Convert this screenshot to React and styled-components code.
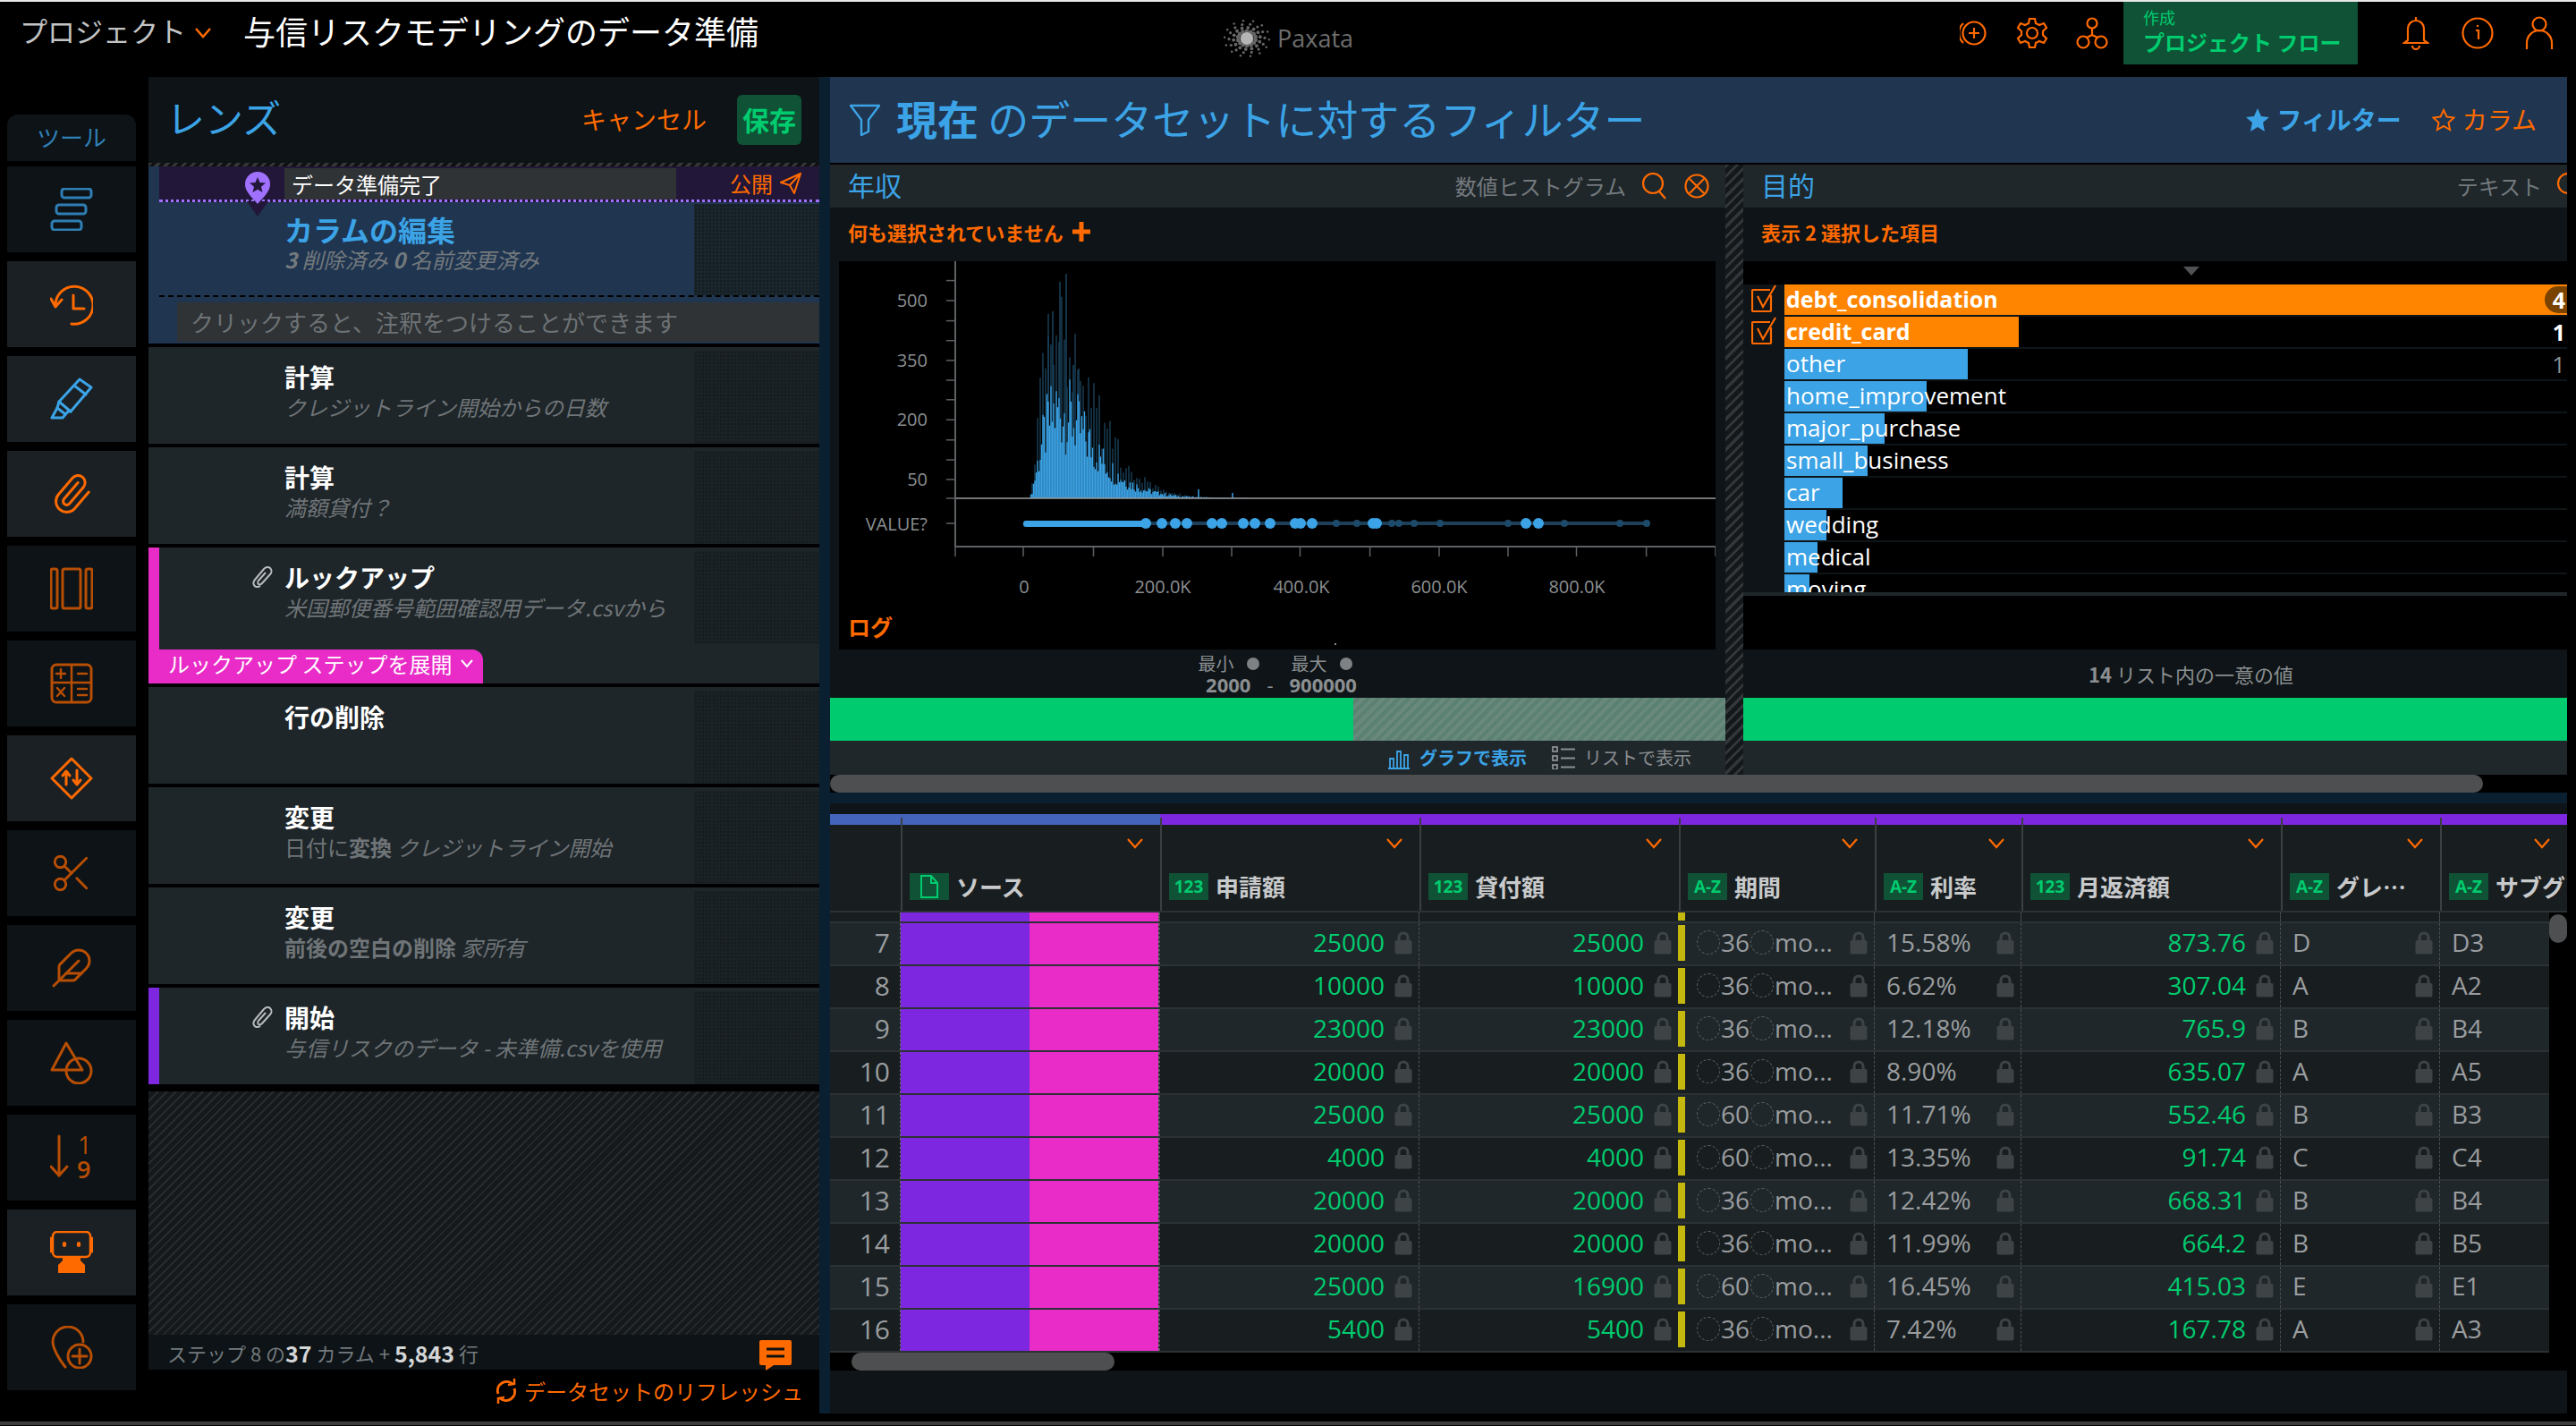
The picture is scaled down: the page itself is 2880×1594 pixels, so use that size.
import React from "react";
import styled, { createGlobalStyle } from "styled-components";
import { Feather, Paperclip, Scissors } from "lucide-react";

const ORANGE = "#ff6a00";
const DIM = "#b84e04";
const BLUE = "#3ba3e6";
const GREEN = "#00cc6f";
const FONT = `"Open Sans", "Noto Sans CJK JP", sans-serif`;
const CJK = `"Noto Sans CJK JP", "Open Sans", sans-serif`;

const Global = createGlobalStyle`
  html, body { margin: 0; padding: 0; background: #000; }
  * { box-sizing: border-box; }
`;

const Page = styled.div`
  width: 2880px;
  height: 1594px;
  background: #000;
  border-top: 2px solid #e8e8e8;
  display: flex;
  flex-direction: column;
  overflow: hidden;
  font-family: ${FONT};
  color: #fff;
`;
const BottomEdge = styled.div`
  height: 4px;
  margin-top: 9px;
  flex: none;
  background: #3d3d3d;
`;

/* top bar */
const TopBar = styled.div`
  height: 70px;
  margin-bottom: 14px;
  display: flex;
  align-items: center;
  flex: none;
`;
const Project = styled.div`
  font: 400 31px/40px ${CJK};
  color: #c2c4c5;
  margin-left: 22px;
  width: 196px;
  margin-bottom: 6px;
`;
const Chevron = styled.svg`
  flex: none;
  fill: none;
  stroke: ${ORANGE};
  stroke-width: 2.5;
`;
const PageTitle = styled.div`
  font: 400 36px/40px ${CJK};
  color: #fff;
  margin-left: 36px;
  width: 1096px;
  margin-bottom: 6px;
  white-space: nowrap;
`;
const Logo = styled.div`
  display: flex;
  align-items: center;
  gap: 8px;
  margin-top: 12px;
  font: 400 27px/30px "Open Sans", sans-serif;
  color: #6d6d6d;
`;
const NavGroup = styled.div`
  margin-left: auto;
  padding-right: 25px;
  display: flex;
  align-items: center;
  height: 100%;
`;
const NavIcon = styled.svg`
  flex: none;
  margin-left: ${(p) => p.$ml}px;
  fill: none;
  stroke: ${ORANGE};
  stroke-width: 2.2;
`;
const FlowBox = styled.div`
  width: 262px;
  height: 70px;
  margin-left: 17px;
  background: #0f5235;
  padding: 6px 0 0 22px;
  color: ${GREEN};
`;
const FlowSmall = styled.div`
  font: 400 18px/22px ${CJK};
`;
const FlowBig = styled.div`
  font: 700 24px/34px ${CJK};
  white-space: nowrap;
`;

/* page body */
const Body = styled.div`
  height: 1494px;
  padding-left: 8px;
  display: flex;
  flex: none;
`;

/* left tool rail */
const Rail = styled.div`
  width: 144px;
  margin-right: 14px;
  padding-top: 42px;
  flex: none;
`;
const RailTab = styled.div`
  height: 52px;
  margin-bottom: 6px;
  background: #0d1316;
  border-radius: 12px 12px 0 0;
  color: #2f7fb5;
  font: 400 26px/50px ${CJK};
  text-align: center;
`;
const RailItem = styled.div`
  height: 96px;
  margin-bottom: 10px;
  background: ${(p) => (p.$on ? "#1a2024" : "#0d1316")};
  display: flex;
  align-items: center;
  justify-content: center;
  color: ${(p) => p.$color};
  svg { display: block; }
`;

/* lens panel */
const Lens = styled.div`
  width: 750px;
  flex: none;
  display: flex;
  flex-direction: column;
`;
const LensHead = styled.div`
  height: 96px;
  background: #0d1316;
  display: flex;
  align-items: center;
  padding: 0 20px 0 20px;
  flex: none;
`;
const LensTitle = styled.div`
  font: 400 43px/50px ${CJK};
  color: ${BLUE};
  flex: 1;
  margin-bottom: 8px;
`;
const Cancel = styled.div`
  font: 400 28px/40px ${CJK};
  color: ${ORANGE};
  margin: 0 34px 2px 0;
`;
const Save = styled.div`
  width: 72px;
  height: 56px;
  border-radius: 6px;
  background: #0f5235;
  color: ${GREEN};
  font: 700 30px/54px ${CJK};
  text-align: center;
`;
const DashStrip = styled.div`
  height: 4px;
  flex: none;
  background: repeating-linear-gradient(135deg, #34383a 0 3px, #111 3px 7px);
`;
const StepList = styled.div`
  display: flex;
  flex-direction: column;
  gap: 4px;
  flex: none;
`;
const ActiveStep = styled.div`
  height: 198px;
  background: #1f3550;
  position: relative;
`;
const MilestoneBar = styled.div`
  margin-left: 12px;
  height: 40px;
  background: #221738;
  border-bottom: 3px dotted #a070ff;
  display: flex;
`;
const MilestoneName = styled.div`
  margin-left: 140px;
  width: 438px;
  height: 35px;
  margin-top: 2px;
  background: #2f3336;
  font: 400 24px/36px ${CJK};
  padding-left: 8px;
`;
const Publish = styled.div`
  margin-left: auto;
  margin-right: 20px;
  display: flex;
  align-items: center;
  gap: 8px;
  font: 400 24px/34px ${CJK};
  color: ${ORANGE};
`;
const Pin = styled.svg`
  position: absolute;
  left: 107px;
  top: 6px;
`;
const ActiveBody = styled.div`
  margin-left: 12px;
  height: 106px;
  border-bottom: 2px dashed #000;
  display: flex;
`;
const ActiveMain = styled.div`
  flex: 1;
  padding: 12px 0 0 140px;
`;
const ActiveTitle = styled.div`
  font: 700 32px/36px ${CJK};
  color: ${BLUE};
`;
const ActiveSub = styled.div`
  font: italic 400 24px/32px ${CJK};
  color: #73797d;
  b { font-weight: 700; }
`;
const Shade = styled.div`
  width: 140px;
  flex: none;
  margin-top: ${(p) => p.$top}px;
  margin-bottom: ${(p) => p.$bottom || 0}px;
  background-color: ${(p) => (p.$active ? "#19262e" : "#1b2226")};
  background-image: radial-gradient(#151a1d 1px, transparent 1px);
  background-size: 4px 4px;
`;
const NoteRow = styled.div`
  height: 50px;
  padding: 6px 0 0 32px;
`;
const NoteField = styled.div`
  height: 44px;
  background: #2f3336;
  color: #6d7275;
  font: 400 26px/44px ${CJK};
  padding-left: 15px;
  white-space: nowrap;
`;
const Step = styled.div`
  background: #1e262a;
  flex: none;
`;
const StepBody = styled.div`
  height: ${(p) => p.$h}px;
  display: flex;
  border-left: ${(p) => (p.$marker ? `12px solid ${p.$marker}` : "none")};
`;
const StepMain = styled.div`
  flex: 1;
  padding: 15px 0 0 ${(p) => (p.$marker ? 104 : 116)}px;
  display: grid;
  grid-template-columns: 24px 1fr;
  column-gap: 12px;
  grid-auto-rows: min-content;
  min-width: 0;
`;
const StepClip = styled.div`
  color: #b9bcbe;
  display: flex;
  align-items: center;
`;
const StepTitle = styled.div`
  font: 700 28px/36px ${CJK};
  color: #fff;
  grid-column: 2;
`;
const StepSub = styled.div`
  grid-column: 2;
  font: 400 24px/32px ${CJK};
  color: #6f7477;
  white-space: nowrap;
  em { font-style: italic; }
  b { font-weight: 700; }
`;
const ExpandRow = styled.div`
  height: 38px;
`;
const ExpandTab = styled.div`
  width: 374px;
  height: 38px;
  background: #e92bc8;
  border-radius: 0 12px 0 0;
  font: 400 24px/32px ${CJK};
  padding: 0 0 6px 22px;
  display: flex;
  align-items: center;
  gap: 10px;
  white-space: nowrap;
`;
const Stripes = styled.div`
  flex: 1;
  margin-top: 8px;
  background: repeating-linear-gradient(135deg, #262b2f 0 2px, #15191c 2px 7px);
`;
const LensFoot = styled.div`
  height: 39px;
  flex: none;
  background: #0d1316;
  display: flex;
  align-items: center;
  padding: 0 31px 0 21px;
  font: 400 22px/34px ${CJK};
  color: #73797d;
  white-space: pre;
  b { color: #d4d6d7; font-weight: 700; font-size: 25px; }
`;
const ChatIcon = styled.svg`
  margin-left: auto;
  margin-top: 6px;
  flex: none;
`;
const Refresh = styled.div`
  height: 49px;
  flex: none;
  display: flex;
  align-items: center;
  justify-content: flex-end;
  gap: 8px;
  padding: 0 18px 2px 0;
  font: 400 24px/34px ${CJK};
  color: ${ORANGE};
`;

/* filter side */
const Main = styled.div`
  width: 1954px;
  flex: none;
  background: #0a1f30;
  display: flex;
  flex-direction: column;
`;
const FilterHead = styled.div`
  height: 96px;
  flex: none;
  margin-left: 12px;
  background: #20354f;
  display: flex;
  align-items: center;
  padding: 0 34px 0 22px;
  color: ${BLUE};
`;
const FilterTitle = styled.div`
  font: 400 46px/56px ${CJK};
  margin: 0 0 6px 18px;
  flex: 1;
  white-space: pre;
  b { font-weight: 700; }
`;
const FilterTab = styled.div`
  display: flex;
  align-items: center;
  gap: 8px;
  margin-left: 34px;
  font: ${(p) => (p.$on ? 700 : 400)} 28px/40px ${CJK};
  color: ${(p) => (p.$on ? BLUE : ORANGE)};
  span { margin-bottom: 2px; }
`;
const BlackGap = styled.div`
  height: 2px;
  flex: none;
  margin-left: 12px;
  background: #000;
`;
const Cards = styled.div`
  height: 682px;
  margin-left: 12px;
  display: flex;
  flex: none;
`;
const Card = styled.div`
  width: ${(p) => p.$w}px;
  flex: none;
  display: flex;
  flex-direction: column;
  overflow: hidden;
`;
const Hatch = styled.div`
  width: 20px;
  flex: none;
  background: repeating-linear-gradient(135deg, #31363a 0 3px, #14181a 3px 8px);
`;
const CardHead = styled.div`
  height: 48px;
  flex: none;
  background: #1f272b;
  display: flex;
  align-items: center;
  padding-left: 20px;
  white-space: nowrap;
`;
const CardName = styled.div`
  font: 400 30px/44px ${CJK};
  color: ${BLUE};
  flex: 1;
  margin-bottom: 4px;
`;
const CardType = styled.div`
  font: 400 24px/44px ${CJK};
  color: #73797d;
`;
const HeadIcon = styled.span`
  color: ${ORANGE};
  margin-left: ${(p) => p.$ml}px;
  margin-right: ${(p) => p.$mr || 0}px;
  display: flex;
  flex: none;
`;
const Selection = styled.div`
  height: 60px;
  flex: none;
  background: #0e1417;
  padding: 0 0 7px 20px;
  display: flex;
  align-items: center;
  gap: 10px;
  font: 700 22px/30px ${CJK};
  color: ${ORANGE};
`;
const ChartWrap = styled.div`
  height: 434px;
  flex: none;
  background: #0e1417;
  padding: 0 10px;
`;
const ChartSvg = styled.svg`
  display: block;
  background: #000;
`;
const AxisText = styled.text`
  font-family: "Open Sans", sans-serif;
  font-size: 20px;
  fill: #8b8f91;
  text-anchor: ${(p) => p.$anchor || "end"};
  dominant-baseline: central;
`;
const LogText = styled.text`
  font-family: ${CJK};
  font-weight: 700;
  font-size: 25px;
  fill: ${ORANGE};
  dominant-baseline: central;
`;
const Range = styled.div`
  height: 54px;
  flex: none;
  background: #0e1417;
  display: flex;
  flex-direction: column;
  align-items: center;
  padding: 4px 0 0 0;
  color: #8b8f91;
`;
const RangeTop = styled.div`
  display: flex;
  align-items: center;
  font: 400 20px/24px ${CJK};
  transform: translateX(-3px);
`;
const RangeDot = styled.span`
  width: 14px;
  height: 14px;
  border-radius: 50%;
  background: #7e8285;
  margin: 0 ${(p) => p.$mr}px 0 14px;
`;
const RangeValues = styled.div`
  display: flex;
  font: 700 22px/22px "Open Sans", sans-serif;
  transform: translateX(4px);
`;
const RangeDash = styled.span`
  margin: 0 18px;
  font-weight: 400;
`;
const GreenBar = styled.div`
  height: 48px;
  flex: none;
  display: flex;
  background: repeating-linear-gradient(135deg, #5b8172 0 4px, #68897c 4px 8px);
`;
const GreenFill = styled.div`
  background: ${GREEN};
`;
const CardFoot = styled.div`
  height: 38px;
  flex: none;
  background: #1f272b;
  display: flex;
  align-items: center;
  justify-content: flex-end;
  padding-right: 38px;
`;
const ViewOption = styled.div`
  display: flex;
  align-items: center;
  gap: 10px;
  margin-left: 28px;
  font: ${(p) => (p.$on ? 700 : 400)} 20px/30px ${CJK};
  color: ${(p) => (p.$on ? BLUE : "#8b8f91")};
`;
const ListBody = styled.div`
  height: 434px;
  flex: none;
  background: #000;
`;
const Caret = styled.div`
  height: 22px;
  display: flex;
  justify-content: center;
  padding: 6px 0 0 80px;
  &::before {
    content: "";
    height: 0;
    border: 9px solid transparent;
    border-top: 10px solid #4f5356;
    border-bottom: 0;
  }
`;
const ListScroll = styled.div`
  margin-top: 4px;
  height: 344px;
  overflow: hidden;
  background: #0e1417;
`;
const ListRow = styled.div`
  height: 36px;
  display: flex;
`;
const CheckCol = styled.div`
  width: 46px;
  flex: none;
  padding: 0 0 0 9px;
`;
const BarCell = styled.div`
  flex: 1;
  height: 34px;
  background-color: #000;
  background-image: linear-gradient(${(p) => p.$c}, ${(p) => p.$c});
  background-repeat: no-repeat;
  font: ${(p) => (p.$bold ? "700 25px/33px" : "400 26px/33px")} "Open Sans", sans-serif;
  padding-left: 2px;
  display: flex;
  justify-content: space-between;
  white-space: nowrap;
  overflow: hidden;
`;
const Count = styled.span`
  font-weight: ${(p) => (p.$strong ? 700 : 400)};
  color: ${(p) => p.$c};
  background: ${(p) => p.$bg || "transparent"};
  border-radius: 16px 0 0 16px;
  height: 30px;
  margin-top: 2px;
  line-height: 30px;
  padding: 0 2px 0 ${(p) => (p.$bg ? 9 : 0)}px;
`;
const ListEnd = styled.div`
  height: 4px;
  background: #1f272b;
`;
const UniqueCount = styled.div`
  height: 54px;
  flex: none;
  background: #0e1417;
  font: 400 22px/54px ${CJK};
  color: #8b8f91;
  text-align: center;
  padding-left: 80px;
  b { font-weight: 700; }
`;
const HScroll = styled.div`
  height: 20px;
  flex: none;
  margin-left: ${(p) => p.$ml}px;
  background: #000;
  display: flex;
`;
const Thumb = styled.div`
  height: 20px;
  width: ${(p) => p.$w}px;
  margin-left: ${(p) => p.$ml}px;
  border-radius: 10px;
  background: #4d4f51;
`;

/* data table */
const Table = styled.div`
  margin: 12px 0 0 12px;
  flex: 1;
  background: #0e1417;
  padding-top: 12px;
  display: flex;
  flex-direction: column;
  min-height: 0;
`;
const Bands = styled.div`
  height: 12px;
  flex: none;
  display: flex;
  background: #7d28e0;
`;
const BandBlue = styled.div`
  width: 369px;
  background: #4464bc;
`;
const HeadRow = styled.div`
  height: 98px;
  flex: none;
  display: flex;
  background: #181d20;
  border-bottom: 2px solid #2c3135;
`;
const HeadCell = styled.div`
  width: ${(p) => p.$w}px;
  flex: none;
  border-left: ${(p) => (p.$first ? "none" : "2px solid #3b3f42")};
  margin-top: -8px;
  display: flex;
  flex-direction: column;
  overflow: hidden;
  padding: 0 0 12px 8px;
`;
const HeadCaret = styled.svg`
  align-self: flex-end;
  margin: 23px 19px 0 0;
  fill: none;
  stroke: ${ORANGE};
  stroke-width: 2.2;
  flex: none;
`;
const HeadName = styled.div`
  margin-top: auto;
  display: flex;
  align-items: center;
  gap: 8px;
  font: 700 26px/30px ${CJK};
  color: #c8cacb;
  white-space: nowrap;
`;
const TypeBadge = styled.span`
  width: 44px;
  height: 30px;
  flex: none;
  background: #0f5235;
  color: ${GREEN};
  font: 700 19px/30px "Open Sans", sans-serif;
  text-align: center;
  display: flex;
  align-items: center;
  justify-content: center;
`;
const TableBody = styled.div`
  height: 492px;
  flex: none;
  display: flex;
`;
const RowsWrap = styled.div`
  flex: 1;
  min-width: 0;
`;
const VScroll = styled.div`
  width: 20px;
  flex: none;
  background: #000;
  padding-top: 2px;
`;
const VThumb = styled.div`
  height: 32px;
  border-radius: 10px;
  background: #4d4f51;
`;
const Row = styled.div`
  height: ${(p) => (p.$spacer ? 12 : 48)}px;
  display: flex;
  background: ${(p) => (p.$alt ? "#1f272b" : "#181d20")};
  border-bottom: 2px solid #2c3135;
`;
const Cell = styled.div`
  width: ${(p) => p.$w}px;
  flex: none;
  display: flex;
  align-items: center;
  justify-content: ${(p) => (p.$right ? "flex-end" : "flex-start")};
  padding: 0 7px 3px 13px;
  border-left: ${(p) => (p.$first ? "none" : "1px dashed #4c5154")};
  font: 400 28px/43px "Open Sans", sans-serif;
  color: ${(p) => (p.$green ? GREEN : "#9a9d9f")};
  white-space: nowrap;
  overflow: hidden;
  svg { flex: none; }
`;
const CellText = styled.span`
  flex: ${(p) => (p.$grow ? 1 : "none")};
  margin-right: 11px;
`;
const RowNum = styled.div`
  width: 79px;
  flex: none;
  padding-right: 12px;
  text-align: right;
  font: 400 30px/43px "Open Sans", sans-serif;
  color: #9a9d9f;
`;
const SourceCell = styled.div`
  width: 290px;
  flex: none;
  display: flex;
  border-left: 1px dashed #6a6a6a;
  border-right: 1px dashed #6a6a6a;
  margin-left: -1px;
`;
const Paint = styled.div`
  flex: 1;
  background: ${(p) => p.$c};
`;
const TermCell = styled(Cell)`
  padding: 0 7px 3px 0;
  border-left: none;
`;
const YellowMark = styled.span`
  width: 8px;
  height: ${(p) => p.$h}px;
  flex: none;
  background: #c4b70e;
  margin-right: 13px;
`;
const Blank = styled.span`
  width: 26px;
  height: 27px;
  flex: none;
  border: 1px dashed #5c6063;
  border-radius: 50%;
`;
const TermText = styled.span`
  margin: 0 1px;
`;

const Lock = () => (
  <svg width="20" height="26" viewBox="0 0 20 26">
    <path d="M5 12V7a5 5 0 0 1 10 0v5" fill="none" stroke="#3e4346" strokeWidth="3.2" />
    <rect x="0.5" y="10" width="19" height="15.5" rx="2" fill="#3e4346" />
  </svg>
);

const CaretDown = () => (
  <HeadCaret width="18" height="12" viewBox="0 0 18 12">
    <path d="M1 1l8 9 8-9" />
  </HeadCaret>
);

const ClipSmall = () => (
  <svg width="24" height="26" viewBox="0 0 24 26" fill="none" stroke="currentColor" strokeWidth="2">
    <path d="M9 23c-3 2-6 1-7-1s-1-4 1-6L13 4c2-2 5-3 7-1s2 5 0 7l-9 10c-1 1-3 2-4 1s-1-3 0-4l8-9" />
  </svg>
);

const RailSvg = ({ children }) => (
  <svg width="48" height="48" viewBox="0 0 48 48" fill="none" stroke="currentColor" strokeWidth="3" strokeLinecap="round" strokeLinejoin="round">
    {children}
  </svg>
);

const railItems = [
  {
    color: "#2f7fb5",
    icon: (
      <RailSvg>
        <rect x="13" y="1" width="33" height="10" rx="3" />
        <rect x="7" y="19" width="33" height="10" rx="3" />
        <rect x="2" y="37" width="33" height="10" rx="3" />
      </RailSvg>
    ),
  },
  {
    color: ORANGE,
    on: true,
    icon: (
      <RailSvg>
        <path d="M6 25A21 21 0 1 1 24 46" />
        <path d="M1 18l5 9 7-8" />
        <path d="M26 14v15h12" />
      </RailSvg>
    ),
  },
  {
    color: BLUE,
    on: true,
    icon: (
      <RailSvg>
        <path d="M33 2L46 11 23 38 10 27z" />
        <path d="M27 9l13 10" />
        <path d="M10 27L8 34 2 45h12l6-7 3 0" />
        <path d="M8 34l9 7" />
      </RailSvg>
    ),
  },
  {
    color: ORANGE,
    on: true,
    icon: <Paperclip size={48} strokeWidth={1.5} style={{ transform: "rotate(-4deg)" }} />,
  },
  {
    color: DIM,
    icon: (
      <RailSvg>
        <rect x="1" y="2" width="7" height="44" rx="2" />
        <rect x="14" y="2" width="20" height="44" rx="2" />
        <rect x="40" y="2" width="7" height="44" rx="2" />
      </RailSvg>
    ),
  },
  {
    color: DIM,
    icon: (
      <RailSvg>
        <rect x="2" y="3" width="44" height="42" rx="5" />
        <path d="M24 3v42M2 23h44M7 13h10M12 8v10M31 13h10M8 29l8 9M16 29l-8 9M31 30h10M31 37h10" strokeWidth="2.5" />
      </RailSvg>
    ),
  },
  {
    color: ORANGE,
    on: true,
    icon: (
      <RailSvg>
        <path d="M24 2l22 22-22 22L2 24z" />
        <path d="M18 31V17M14 21l4-5 4 5" strokeWidth="3" />
        <path d="M30 15v15M26 26l4 5 4-5" strokeWidth="3" />
      </RailSvg>
    ),
  },
  { color: DIM, icon: <Scissors size={50} strokeWidth={1.4} /> },
  { color: DIM, icon: <Feather size={48} strokeWidth={1.5} /> },
  {
    color: DIM,
    icon: (
      <RailSvg>
        <path d="M18 2L2 32h34z" />
        <circle cx="32" cy="33" r="14" />
      </RailSvg>
    ),
  },
  {
    color: DIM,
    icon: (
      <svg width="48" height="52" viewBox="0 0 48 52" fill="none" stroke="currentColor" strokeWidth="3" strokeLinecap="round">
        <path d="M10 2v44M1 36l9 10 9-10" />
        <text x="31" y="22" fontFamily="Open Sans, sans-serif" fontSize="27" fill="currentColor" stroke="none">1</text>
        <text x="30" y="49" fontFamily="Open Sans, sans-serif" fontSize="27" fontWeight="600" fill="currentColor" stroke="none">9</text>
      </svg>
    ),
  },
  {
    color: ORANGE,
    on: true,
    icon: (
      <svg width="48" height="48" viewBox="0 0 48 48" fill="none" stroke="currentColor" strokeWidth="2.5">
        <rect x="3" y="1" width="42" height="28" rx="5" />
        <path d="M3 8H1v15h2M45 8h2v15h-2" />
        <ellipse cx="16" cy="15" rx="2.2" ry="3" fill="currentColor" stroke="none" />
        <ellipse cx="32" cy="15" rx="2.2" ry="3" fill="currentColor" stroke="none" />
        <path d="M14 30h20v3l5 5v9H9v-9l5-5z" fill="currentColor" stroke="none" />
      </svg>
    ),
  },
  {
    color: DIM,
    icon: (
      <RailSvg>
        <path d="M17 46C12 40 3 26 3 18a17 17 0 0 1 34 0" />
        <circle cx="33" cy="34" r="13" />
        <path d="M33 26v16M25 34h16" />
      </RailSvg>
    ),
  },
];

const steps = [
  { title: "計算", sub: <em>クレジットライン開始からの日数</em> },
  { title: "計算", sub: <em>満額貸付？</em> },
  { title: "ルックアップ", sub: <em>米国郵便番号範囲確認用データ.csvから</em>, clip: true, marker: "#e92bc8", expand: true },
  { title: "行の削除" },
  { title: "変更", sub: <>日付に<b>変換</b> <em>クレジットライン開始</em></> },
  { title: "変更", sub: <><b>前後の空白の削除</b> <em>家所有</em></> },
  { title: "開始", sub: <em>与信リスクのデータ - 未準備.csvを使用</em>, clip: true, marker: "#7d28e0" },
];

// histogram, rendered from a fixed pseudo noise so the picture stays the same
const noise = (i) => {
  const s = Math.sin(i * 12.9898) * 43758.5453;
  return s - Math.floor(s);
};
const buildBars = () => {
  let bright = "";
  let dark = "";
  for (let i = 0; i < 190; i++) {
    const x = 213 + i * 1.5;
    const t = (i * 1.5) / 34;
    const env = 125 * Math.pow(t, 1.6) * Math.exp(1.6 * (1 - t));
    const h = env * (0.4 + 0.75 * noise(i));
    const d = env * (1 + 1.05 * noise(i + 500));
    if (i % 2 === 0) dark += `M${x} 265V${265 - d}`;
    bright += `M${x} 265V${265 - h}`;
  }
  return { bright, dark };
};
const bars = buildBars();

const yTicks = [-1, 21.6, 44, 66.6, 88.7, 110.9, 133, 154.8, 177.3, 199.8, 222, 244, 265, 293];
const xTicks = [130, 206, 284.5, 362, 439, 515.5, 593.6, 671, 748, 824.5, 902.6, 980];
const brightDots = [343, 361, 376, 389, 417, 428, 452, 465, 482, 510, 516, 529, 597, 601, 768, 782];
const darkDots = [556, 579, 618, 626, 643, 672, 748, 811, 873, 903];

const Histogram = () => (
  <ChartSvg width="980" height="434" viewBox="0 0 980 434">
    <path d={bars.dark} stroke="#1a4058" strokeWidth="1.4" />
    <path d="M254 265V14M247 265V23M239 265V56M234 265V84M262 265V116M268 265V120" stroke="#1a4058" strokeWidth="1.6" />
    <path d={bars.bright} stroke={BLUE} strokeWidth="1.3" />
    <path d="M311 265v-14M402 265v-10M440 265v-6M360 265v-5" stroke={BLUE} strokeWidth="1.5" />
    <path d="M130 265H980" stroke="#9a9d9f" strokeWidth="1.4" />
    <path d="M130 -1V319H980" stroke="#5d6164" strokeWidth="2" fill="none" />
    {yTicks.map((y) => (
      <path key={y} d={`M120 ${y}H130`} stroke="#5d6164" strokeWidth="1.5" />
    ))}
    {xTicks.map((x) => (
      <path key={x} d={`M${x} 319V330`} stroke="#5d6164" strokeWidth="1.5" />
    ))}
    <AxisText x="99" y="43">500</AxisText>
    <AxisText x="99" y="110">350</AxisText>
    <AxisText x="99" y="176">200</AxisText>
    <AxisText x="99" y="243">50</AxisText>
    <AxisText x="99" y="293">VALUE?</AxisText>
    <path d="M340 293H904" stroke="#1d4058" strokeWidth="4" />
    {darkDots.map((x) => (
      <circle key={x} cx={x} cy="293" r="4" fill="#1d4a6a" />
    ))}
    <rect x="206" y="290" width="136" height="7" rx="3" fill={BLUE} />
    {brightDots.map((x) => (
      <circle key={x} cx={x} cy="293" r="6" fill={BLUE} />
    ))}
    <AxisText x="207" y="363" $anchor="middle">0</AxisText>
    <AxisText x="362" y="363" $anchor="middle">200.0K</AxisText>
    <AxisText x="517" y="363" $anchor="middle">400.0K</AxisText>
    <AxisText x="671" y="363" $anchor="middle">600.0K</AxisText>
    <AxisText x="825" y="363" $anchor="middle">800.0K</AxisText>
    <LogText x="10" y="408">ログ</LogText>
    <rect x="554" y="427" width="2" height="2" fill="#8b8f91" />
  </ChartSvg>
);

const purposes = [
  { name: "debt_consolidation", w: 876, hit: true, count: "4", bg: "#7a4300" },
  { name: "credit_card", w: 262, hit: true, count: "1" },
  { name: "other", w: 205, count: "1", gray: true },
  { name: "home_improvement", w: 159 },
  { name: "major_purchase", w: 112 },
  { name: "small_business", w: 93 },
  { name: "car", w: 65 },
  { name: "wedding", w: 47 },
  { name: "medical", w: 37 },
  { name: "moving", w: 28 },
];

const columns = [
  { name: "申請額", type: "123", w: 290 },
  { name: "貸付額", type: "123", w: 290 },
  { name: "期間", type: "A-Z", w: 219 },
  { name: "利率", type: "A-Z", w: 164 },
  { name: "月返済額", type: "123", w: 290 },
  { name: "グレ…", type: "A-Z", w: 178 },
  { name: "サブグ…", type: "A-Z", w: 142 },
];

const rows = [
  [7, 25000, 25000, 36, "15.58%", "873.76", "D", "D3"],
  [8, 10000, 10000, 36, "6.62%", "307.04", "A", "A2"],
  [9, 23000, 23000, 36, "12.18%", "765.9", "B", "B4"],
  [10, 20000, 20000, 36, "8.90%", "635.07", "A", "A5"],
  [11, 25000, 25000, 60, "11.71%", "552.46", "B", "B3"],
  [12, 4000, 4000, 60, "13.35%", "91.74", "C", "C4"],
  [13, 20000, 20000, 36, "12.42%", "668.31", "B", "B4"],
  [14, 20000, 20000, 36, "11.99%", "664.2", "B", "B5"],
  [15, 25000, 16900, 60, "16.45%", "415.03", "E", "E1"],
  [16, 5400, 5400, 36, "7.42%", "167.78", "A", "A3"],
];

const PaxataMark = () => {
  const dots = [];
  for (let ring = 1; ring < 6; ring++) {
    for (let a = 0; a < 14; a++) {
      const r = ring * 5;
      const ang = (a / 14) * Math.PI * 2 + ring;
      dots.push(<circle key={`${ring}-${a}`} cx={26 + r * Math.cos(ang)} cy={22 + r * 0.8 * Math.sin(ang)} r={3 - ring * 0.35} fill="#666" />);
    }
  }
  return (
    <svg width="52" height="44" viewBox="0 0 52 44">
      {dots}
      <circle cx="26" cy="22" r="7" fill="#b5b5b5" />
    </svg>
  );
};

const App = () => (
  <Page>
    <Global />
    <TopBar>
      <Project>プロジェクト</Project>
      <Chevron width="18" height="12" viewBox="0 0 18 12">
        <path d="M1 1l8 9 8-9" />
      </Chevron>
      <PageTitle>与信リスクモデリングのデータ準備</PageTitle>
      <Logo>
        <PaxataMark />
        Paxata
      </Logo>
      <NavGroup>
        <NavIcon $ml={0} width="30" height="28" viewBox="0 0 30 28">
          <circle cx="16" cy="14" r="12.5" />
          <path d="M4 3a15 15 0 0 0 0 22M16 8v12M10 14h12" />
        </NavIcon>
        <NavIcon $ml={33} width="36" height="36" viewBox="0 0 36 36">
          <path d="M15 2h6l1 5 4 2 5-2 3 5-4 4v4l4 4-3 5-5-2-4 2-1 5h-6l-1-5-4-2-5 2-3-5 4-4v-4l-4-4 3-5 5 2 4-2z" />
          <circle cx="18" cy="18" r="6" />
        </NavIcon>
        <NavIcon $ml={31} width="36" height="36" viewBox="0 0 36 36">
          <circle cx="18" cy="7" r="5.5" />
          <circle cx="8" cy="28" r="6.5" />
          <circle cx="28" cy="28" r="6.5" />
          <path d="M18 13v7M18 20l-6 3M18 20l6 3" />
        </NavIcon>
        <FlowBox>
          <FlowSmall>作成</FlowSmall>
          <FlowBig>プロジェクト フロー</FlowBig>
        </FlowBox>
        <NavIcon $ml={50} width="30" height="38" viewBox="0 0 30 38">
          <path d="M15 1v4M6 27V14a9 9 0 0 1 18 0v13l4 3H2zM11 33a4 4 0 0 0 8 0" />
        </NavIcon>
        <NavIcon $ml={36} width="36" height="36" viewBox="0 0 36 36">
          <circle cx="18" cy="18" r="16.5" />
          <path d="M16 15h3v10M18 9v2" />
        </NavIcon>
        <NavIcon $ml={35} width="32" height="38" viewBox="0 0 32 38">
          <circle cx="16" cy="9" r="7.5" />
          <path d="M2 37V30a14 14 0 0 1 28 0v7" />
        </NavIcon>
      </NavGroup>
    </TopBar>

    <Body>
      <Rail>
        <RailTab>ツール</RailTab>
        {railItems.map((item, i) => (
          <RailItem key={i} $on={item.on} $color={item.color}>
            {item.icon}
          </RailItem>
        ))}
      </Rail>

      <Lens>
        <LensHead>
          <LensTitle>レンズ</LensTitle>
          <Cancel>キャンセル</Cancel>
          <Save>保存</Save>
        </LensHead>
        <DashStrip />
        <StepList>
          <ActiveStep>
            <MilestoneBar>
              <MilestoneName>データ準備完了</MilestoneName>
              <Publish>
                公開
                <svg width="24" height="24" viewBox="0 0 24 24" fill="none" stroke={ORANGE} strokeWidth="2">
                  <path d="M23 1L1 11l10 3 5 9zM23 1L11 14" />
                </svg>
              </Publish>
            </MilestoneBar>
            <Pin width="30" height="50" viewBox="0 0 30 50">
              <path d="M15 50L3 33h24z" fill="#221738" />
              <path d="M15 36C8 28 1 22 1 14a14 14 0 0 1 28 0c0 8-7 14-14 22z" fill="#a070ff" />
              <path d="M15 6l2.5 6 6.5.5-5 4.300 1.500 6.200L15 19.700 9.500 23 11 16.800 6 12.500l6.500-.5z" fill="#221738" />
            </Pin>
            <ActiveBody>
              <ActiveMain>
                <ActiveTitle>カラムの編集</ActiveTitle>
                <ActiveSub><b>3</b> 削除済み <b>0</b> 名前変更済み</ActiveSub>
              </ActiveMain>
              <Shade $top={2} $active />
            </ActiveBody>
            <NoteRow>
              <NoteField>クリックすると、注釈をつけることができます</NoteField>
            </NoteRow>
          </ActiveStep>
          {steps.map((s, i) => (
            <Step key={i}>
              <StepBody $h={s.expand ? 114 : 108} $marker={s.marker}>
                <StepMain $marker={s.marker}>
                  {s.clip && <StepClip><ClipSmall /></StepClip>}
                  <StepTitle>{s.title}</StepTitle>
                  {s.sub && <StepSub>{s.sub}</StepSub>}
                </StepMain>
                <Shade $top={4} $bottom={s.expand ? 6 : 0} />
              </StepBody>
              {s.expand && (
                <ExpandRow>
                  <ExpandTab>
                    ルックアップ ステップを展開
                    <svg width="14" height="10" viewBox="0 0 14 10" fill="none" stroke="#fff" strokeWidth="2">
                      <path d="M1 1l6 7 6-7" />
                    </svg>
                  </ExpandTab>
                </ExpandRow>
              )}
            </Step>
          ))}
        </StepList>
        <Stripes />
        <LensFoot>
          ステップ 8 の<b>37</b> カラム + <b>5,843</b> 行
          <ChatIcon width="36" height="34" viewBox="0 0 36 34">
            <path d="M2 0h32a2 2 0 0 1 2 2v24a2 2 0 0 1-2 2H16l-9 6v-6H2a2 2 0 0 1-2-2V2a2 2 0 0 1 2-2z" fill={ORANGE} />
            <path d="M8 10h20M8 18h20" stroke="#111" strokeWidth="3" />
          </ChatIcon>
        </LensFoot>
        <Refresh>
          <svg width="24" height="30" viewBox="0 0 24 30" fill="none" stroke={ORANGE} strokeWidth="3">
            <path d="M3 18a10 10 0 0 1 16-11M21 12a10 10 0 0 1-16 11" />
            <path d="M14 8l7-1 0-6M10 22l-7 1 0 6" strokeWidth="2.5" />
          </svg>
          データセットのリフレッシュ
        </Refresh>
      </Lens>

      <Main>
        <FilterHead>
          <svg width="34" height="36" viewBox="0 0 34 36" fill="none" stroke={BLUE} strokeWidth="2.4" strokeLinejoin="round">
            <path d="M1 2h32L21 18v13l-8 4V18z" />
          </svg>
          <FilterTitle><b>現在</b> のデータセットに対するフィルター</FilterTitle>
          <FilterTab $on>
            <svg width="26" height="26" viewBox="0 0 26 26" fill={BLUE}>
              <path d="M13 0l4 9 9 1-7 6 2 10-8-5-8 5 2-10-7-6 9-1z" />
            </svg>
            <span>フィルター</span>
          </FilterTab>
          <FilterTab>
            <svg width="26" height="26" viewBox="0 0 26 26" fill="none" stroke={ORANGE} strokeWidth="2">
              <path d="M13 2l3.500 7.500 8 1-6 5.500 1.600 8L13 20l-7.100 4 1.600-8-6-5.500 8-1z" />
            </svg>
            <span>カラム</span>
          </FilterTab>
        </FilterHead>
        <BlackGap />
        <Cards>
          <Card $w={1001}>
            <CardHead>
              <CardName>年収</CardName>
              <CardType>数値ヒストグラム</CardType>
              <HeadIcon $ml={17}>
                <svg width="28" height="30" viewBox="0 0 28 30" fill="none" stroke={ORANGE} strokeWidth="2.2">
                  <circle cx="13" cy="12" r="11" />
                  <path d="M20 21l7 8" />
                </svg>
              </HeadIcon>
              <HeadIcon $ml={20} $mr={18}>
                <svg width="28" height="28" viewBox="0 0 28 28" fill="none" stroke={ORANGE} strokeWidth="2.2">
                  <circle cx="14" cy="14" r="12.500" />
                  <path d="M6 6l16 16M22 6L6 22" />
                </svg>
              </HeadIcon>
            </CardHead>
            <Selection>
              何も選択されていません
              <svg width="20" height="22" viewBox="0 0 20 22" fill={ORANGE}>
                <path d="M7.500 0h5v8.500H20v5h-7.500V22h-5v-8.500H0v-5h7.500z" />
              </svg>
            </Selection>
            <ChartWrap>
              <Histogram />
            </ChartWrap>
            <Range>
              <RangeTop>
                最小<RangeDot $mr={36} />最大<RangeDot $mr={0} />
              </RangeTop>
              <RangeValues>
                2000<RangeDash>-</RangeDash>900000
              </RangeValues>
            </Range>
            <GreenBar>
              <GreenFill style={{ width: 585 }} />
            </GreenBar>
            <CardFoot>
              <ViewOption $on>
                <svg width="26" height="26" viewBox="0 0 26 26" fill="none" stroke={BLUE} strokeWidth="1.800">
                  <path d="M1 25h24M3 25V14h4v11M11 25V6h4v19M19 25V10h4v15" />
                </svg>
                グラフで表示
              </ViewOption>
              <ViewOption>
                <svg width="26" height="26" viewBox="0 0 26 26" fill="none" stroke="#8b8f91" strokeWidth="1.800">
                  <rect x="1" y="1" width="5" height="5" />
                  <rect x="1" y="11" width="5" height="5" />
                  <rect x="1" y="21" width="5" height="5" />
                  <path d="M10 3.500h16M10 13.500h16M10 23.500h16" />
                </svg>
                リストで表示
              </ViewOption>
            </CardFoot>
          </Card>
          <Hatch />
          <Card $w={921}>
            <CardHead>
              <CardName>目的</CardName>
              <CardType>テキスト</CardType>
              <HeadIcon $ml={16} $mr={-16}>
                <svg width="28" height="30" viewBox="0 0 28 30" fill="none" stroke={ORANGE} strokeWidth="2.2">
                  <circle cx="13" cy="12" r="11" />
                </svg>
              </HeadIcon>
            </CardHead>
            <Selection>表示 2 選択した項目</Selection>
            <ListBody>
              <Caret />
              <ListScroll>
                {purposes.map((p) => (
                  <ListRow key={p.name}>
                    <CheckCol>
                      {p.hit && (
                        <svg width="28" height="32" viewBox="0 0 28 32" fill="none" stroke={ORANGE} strokeWidth="2.200">
                          <path d="M22 12v17a1 1 0 0 1-1 1H2a1 1 0 0 1-1-1V7a1 1 0 0 1 1-1h19" />
                          <path d="M7 13l6 12 14-24" />
                        </svg>
                      )}
                    </CheckCol>
                    <BarCell
                      $c={p.hit ? "#ff8500" : BLUE}
                      $bold={p.hit}
                      style={{ backgroundSize: `${p.w}px 100%` }}
                    >
                      {p.name}
                      {p.count && (
                        <Count $c={p.gray ? "#8b8f91" : "#fff"} $strong={p.hit} $bg={p.bg}>{p.count}</Count>
                      )}
                    </BarCell>
                  </ListRow>
                ))}
              </ListScroll>
              <ListEnd />
            </ListBody>
            <UniqueCount><b>14</b> リスト内の一意の値</UniqueCount>
            <GreenBar>
              <GreenFill style={{ width: "100%" }} />
            </GreenBar>
            <CardFoot />
          </Card>
        </Cards>
        <HScroll $ml={12}>
          <Thumb $w={1848} $ml={0} />
        </HScroll>

        <Table>
          <Bands>
            <BandBlue />
          </Bands>
          <HeadRow>
            <HeadCell $w={79} $first />
            <HeadCell $w={290}>
              <CaretDown />
              <HeadName>
                <TypeBadge>
                  <svg width="22" height="26" viewBox="0 0 22 26" fill="none" stroke={GREEN} strokeWidth="2">
                    <path d="M2 1h11l7 8v16H2zM13 1v8h7" />
                  </svg>
                </TypeBadge>
                ソース
              </HeadName>
            </HeadCell>
            {columns.map((c) => (
              <HeadCell key={c.name} $w={c.w}>
                <CaretDown />
                <HeadName>
                  <TypeBadge>{c.type}</TypeBadge>
                  {c.name}
                </HeadName>
              </HeadCell>
            ))}
          </HeadRow>
          <TableBody>
            <RowsWrap>
              <Row $spacer>
                <RowNum />
                <SourceCell>
                  <Paint $c="#7d28e0" />
                  <Paint $c="#e92bc8" />
                </SourceCell>
                <Cell $w={290} />
                <Cell $w={290} />
                <TermCell $w={219}><YellowMark $h={10} /></TermCell>
                <Cell $w={164} />
                <Cell $w={290} />
                <Cell $w={178} />
                <Cell $w={121} />
              </Row>
              {rows.map((r, i) => (
                <Row key={r[0]} $alt={i % 2 === 0}>
                  <RowNum>{r[0]}</RowNum>
                  <SourceCell>
                    <Paint $c="#7d28e0" />
                    <Paint $c="#e92bc8" />
                  </SourceCell>
                  <Cell $w={290} $right $green><CellText>{r[1]}</CellText><Lock /></Cell>
                  <Cell $w={290} $right $green><CellText>{r[2]}</CellText><Lock /></Cell>
                  <TermCell $w={219}>
                    <YellowMark $h={40} />
                    <Blank />
                    <TermText>{r[3]}</TermText>
                    <Blank />
                    <TermText>mo...</TermText>
                    <CellText $grow />
                    <Lock />
                  </TermCell>
                  <Cell $w={164}><CellText $grow>{r[4]}</CellText><Lock /></Cell>
                  <Cell $w={290} $right $green><CellText>{r[5]}</CellText><Lock /></Cell>
                  <Cell $w={178}><CellText $grow>{r[6]}</CellText><Lock /></Cell>
                  <Cell $w={121}>{r[7]}</Cell>
                </Row>
              ))}
            </RowsWrap>
            <VScroll>
              <VThumb />
            </VScroll>
          </TableBody>
          <HScroll $ml={0}>
            <Thumb $w={294} $ml={24} />
          </HScroll>
        </Table>
      </Main>
    </Body>
    <BottomEdge />
  </Page>
);

export default App;
